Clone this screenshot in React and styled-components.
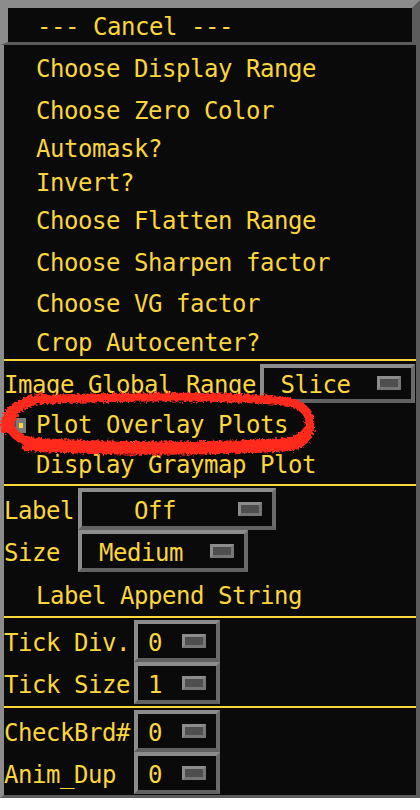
import styled, { createGlobalStyle } from "styled-components";

const Color = {
  Yellow: "#fcd63a",
  Black: "#0a0a0a",
  Light: "#8c8c8c",
  Dark: "#5c5c5c",
  Red: "#ff2a1c",
};

const GlobalStyle = createGlobalStyle`
  body {
    margin: 0;
    background: #ffffff;
    font-family: "DejaVu Sans Mono", "Liberation Mono", monospace;
  }
`;

const Frame = styled.div`
  position: relative;
  width: 420px;
  color: ${Color.Yellow};
  font-size: 24px;
  letter-spacing: -0.45px;
  line-height: 1;
`;

const CancelArea = styled.div`
  border-top: 8px solid ${Color.Light};
  border-left: 8px solid ${Color.Light};
  border-right: 8px solid ${Color.Dark};
  border-bottom: 3px solid ${Color.Dark};
`;

const CancelButton = styled.div`
  height: 34px;
  box-sizing: border-box;
  display: flex;
  align-items: center;
  padding: 3px 0 0 29px;
  background: ${Color.Black};
  white-space: pre;
`;

const Body = styled.div`
  background: ${Color.Black};
  border-left: 4px solid ${Color.Light};
  border-right: 4px solid ${Color.Dark};
  border-bottom: 3px solid ${Color.Dark};
  height: 750px;
`;

const MenuItem = styled.div`
  height: ${(p) => p.$h}px;
  box-sizing: border-box;
  display: flex;
  align-items: center;
  padding: 3px 0 0 32px;
  white-space: pre;
`;

const ToggleItem = styled.div`
  height: ${(p) => p.$h}px;
  box-sizing: border-box;
  display: flex;
  align-items: center;
  padding: 2px 0 0 10px;
  gap: 10px;
  white-space: pre;
`;

const CheckMark = styled.div`
  width: 12px;
  height: 15px;
  box-sizing: border-box;
  background: #7a7a7a;
  border-left: 2px solid #505050;
  display: flex;
  align-items: center;
  justify-content: center;
  &::after {
    content: "";
    width: 4px;
    height: 5px;
    background: ${Color.Yellow};
  }
`;

const Separator = styled.div`
  height: 2px;
  background: ${Color.Yellow};
`;

const FieldRow = styled.div`
  height: ${(p) => p.$h}px;
  display: flex;
  align-items: center;
  gap: 4px;
`;

const FieldGrid = styled.div`
  display: grid;
  grid-template-columns: auto auto;
  justify-content: start;
  align-items: center;
  column-gap: 4px;
  padding: 2px 0 ${(p) => p.$bottom}px;
`;

const FieldLabel = styled.div`
  padding-top: 3px;
  white-space: pre;
`;

const OptionBox = styled.div`
  width: ${(p) => p.$w}px;
  height: ${(p) => p.$h || 42}px;
  box-sizing: border-box;
  display: flex;
  align-items: center;
  padding-right: 10px;
  border-top: 4px solid ${Color.Light};
  border-left: 4px solid ${Color.Light};
  border-right: 4px solid #6a6a6a;
  border-bottom: 4px solid #626262;
`;

const OptionText = styled.div`
  flex: 1;
  text-align: center;
  margin-right: 10px;
  padding-top: 3px;
  white-space: pre;
`;

const Indicator = styled.div`
  width: 24px;
  height: 14px;
  box-sizing: border-box;
  background: #4e4e4e;
  border: 3px solid ${Color.Light};
  border-right-color: #767676;
  border-bottom-color: #767676;
`;

const Annotation = styled.svg`
  position: absolute;
  left: 0;
  top: 0;
  pointer-events: none;
`;

const Option = ({ w, h, value }) => (
  <OptionBox $w={w} $h={h}>
    <OptionText>{value}</OptionText>
    <Indicator />
  </OptionBox>
);

const menuItems = [
  ["Choose Display Range", 44],
  ["Choose Zero Color", 40],
  ["Automask?", 36],
  ["Invert?", 32],
  ["Choose Flatten Range", 44],
  ["Choose Sharpen factor", 40],
  ["Choose VG factor", 42],
  ["Crop Autocenter?", 36],
];

export default function App() {
  return (
    <Frame>
      <GlobalStyle />
      <CancelArea>
        <CancelButton>--- Cancel ---</CancelButton>
      </CancelArea>
      <Body>
        {menuItems.map(([label, h]) => (
          <MenuItem key={label} $h={h}>
            {label}
          </MenuItem>
        ))}
        <Separator />
        <FieldRow $h={44}>
          <FieldLabel>Image Global Range</FieldLabel>
          <Option w={155} h={39} value="Slice" />
        </FieldRow>
        <ToggleItem $h={38}>
          <CheckMark />
          Plot Overlay Plots
        </ToggleItem>
        <MenuItem $h={41}>Display Graymap Plot</MenuItem>
        <Separator />
        <FieldGrid $bottom={0}>
          <FieldLabel>Label</FieldLabel>
          <Option w={198} value="Off" />
          <FieldLabel>Size</FieldLabel>
          <Option w={170} value="Medium" />
        </FieldGrid>
        <MenuItem $h={44}>Label Append String</MenuItem>
        <Separator />
        <FieldGrid $bottom={2}>
          <FieldLabel>Tick Div.</FieldLabel>
          <Option w={86} value="0" />
          <FieldLabel>Tick Size</FieldLabel>
          <Option w={86} value="1" />
        </FieldGrid>
        <Separator />
        <FieldGrid $bottom={1}>
          <FieldLabel>CheckBrd#</FieldLabel>
          <Option w={86} value="0" />
          <FieldLabel>Anim_Dup</FieldLabel>
          <Option w={86} value="0" />
        </FieldGrid>
      </Body>
      <Annotation width="420" height="810" viewBox="0 0 420 810">
        <defs>
          <filter id="rough" x="-5%" y="-20%" width="110%" height="140%">
            <feTurbulence type="fractalNoise" baseFrequency="0.4" numOctaves="2" seed="3" />
            <feDisplacementMap in="SourceGraphic" scale="6" />
          </filter>
        </defs>
        <g fill="none" stroke={Color.Red} strokeLinecap="round" filter="url(#rough)">
          <path
            d="M 36 400 C 120 396, 230 396, 284 401 C 318 405, 318 438, 286 442 C 210 448, 90 446, 34 442 C 4 439, 0 410, 36 400 Z"
            strokeWidth="9"
          />
          <path
            d="M 26 447 C 100 452, 220 452, 290 447 C 308 444, 314 430, 308 414"
            strokeWidth="8"
          />
          <path d="M 5 430 C 2 414, 14 402, 42 397" strokeWidth="8" />
        </g>
      </Annotation>
    </Frame>
  );
}
